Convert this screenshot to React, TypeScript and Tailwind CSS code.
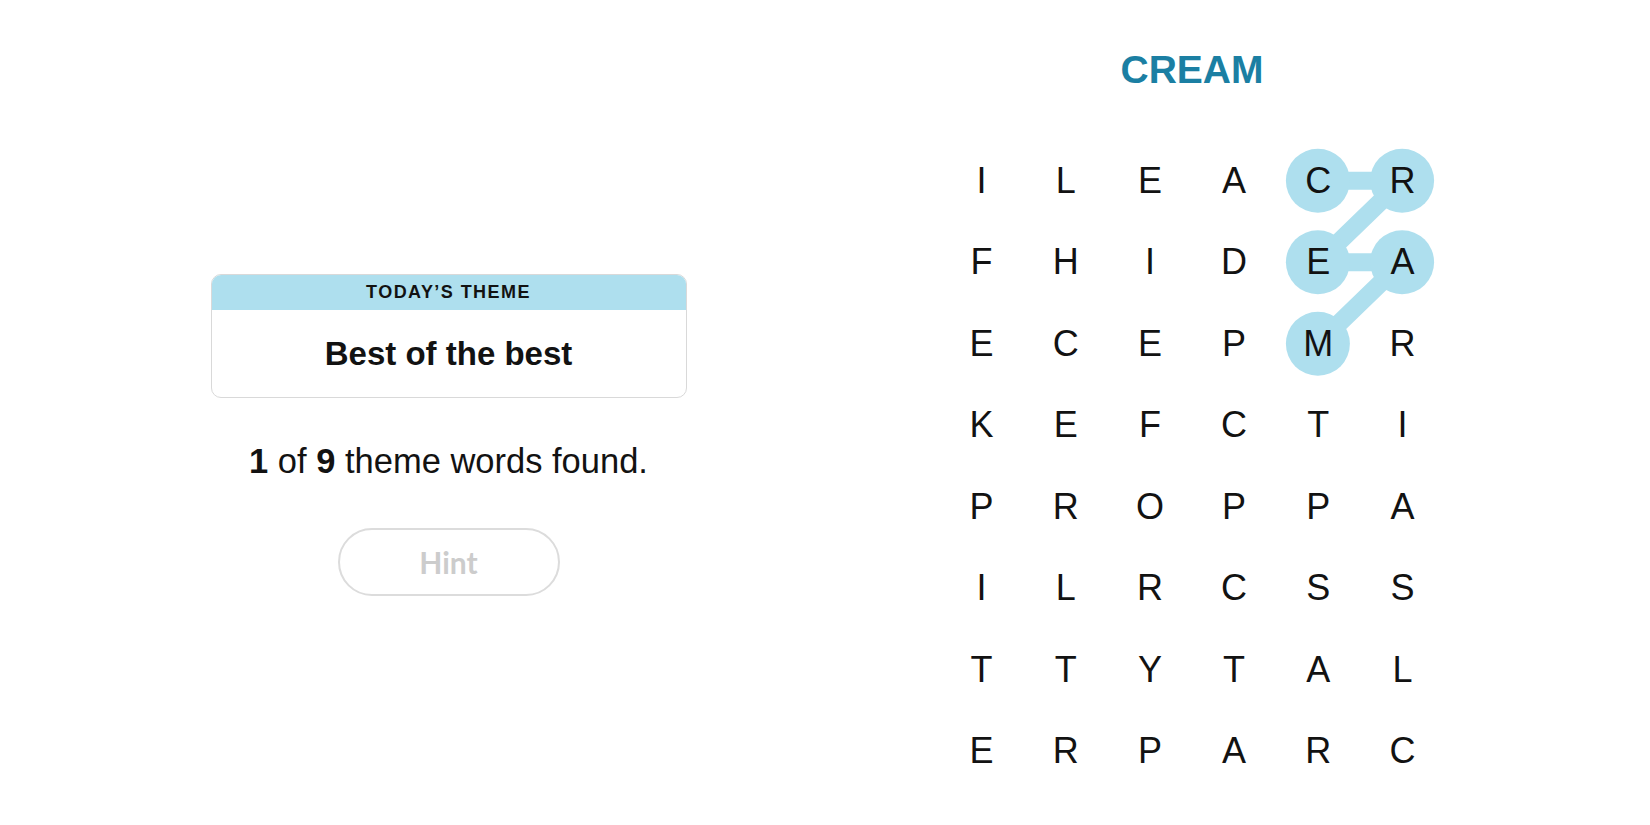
const grid = [
  ['I', 'L', 'E', 'A', 'C', 'R'],
  ['F', 'H', 'I', 'D', 'E', 'A'],
  ['E', 'C', 'E', 'P', 'M', 'R'],
  ['K', 'E', 'F', 'C', 'T', 'I'],
  ['P', 'R', 'O', 'P', 'P', 'A'],
  ['I', 'L', 'R', 'C', 'S', 'S'],
  ['T', 'T', 'Y', 'T', 'A', 'L'],
  ['E', 'R', 'P', 'A', 'R', 'C'],
];

// found word path: C R E A M
const path: [number, number][] = [
  [0, 4],
  [0, 5],
  [1, 4],
  [1, 5],
  [2, 4],
];

const CELL_W = 84.2;
const CELL_H = 81.5;

const center = (r: number, c: number) => ({ x: CELL_W / 2 + c * CELL_W, y: CELL_H / 2 + r * CELL_H });

function ThemeCard() {
  return (
    <div className="w-[476px] rounded-[10px] border border-[#d9d9d9] overflow-hidden bg-white">
      <div className="h-[35px] bg-[#aedfee] flex items-center justify-center text-[18px] font-semibold tracking-[0.08em] text-[#121212]">
        TODAY’S THEME
      </div>
      <div className="h-[87px] flex items-center justify-center text-[33px] font-bold text-[#121212]">
        Best of the best
      </div>
    </div>
  );
}

function Board() {
  const pts = path.map(([r, c]) => center(r, c));

  return (
    <div className="relative grid grid-cols-[repeat(6,84.2px)] auto-rows-[81.5px]">
      <svg className="absolute inset-0" width={CELL_W * 6} height={CELL_H * 8}>
        <polyline
          points={pts.map((p) => `${p.x},${p.y}`).join(' ')}
          fill="none"
          stroke="#aedfee"
          strokeWidth={18}
          strokeLinejoin="round"
        />
        {pts.map((p, i) => (
          <circle key={i} cx={p.x} cy={p.y} r={32} fill="#aedfee" />
        ))}
      </svg>
      {grid.map((row, r) =>
        row.map((letter, c) => (
          <div key={`${r}-${c}`} className="relative flex items-center justify-center text-[36px] leading-none text-[#121212]">
            {letter}
          </div>
        ))
      )}
    </div>
  );
}

export default function App() {
  return (
    <div className="min-h-screen bg-white flex justify-center gap-[253px] pl-[5px]" style={{ fontFamily: '"Liberation Sans", Arial, sans-serif' }}>
      {/* Left side */}
      <div className="w-[476px] pt-[274px] flex flex-col items-center">
        <ThemeCard />
        <p className="mt-[43px] text-[34.5px] leading-[40px] text-[#121212]">
          <span className="font-bold">1</span> of <span className="font-bold">9</span> theme words found.
        </p>
        <button
          className="mt-[47px] w-[222px] h-[68px] rounded-full border-2 border-[#dcdcdc] text-[30px] font-bold text-[#cccccc] bg-white"
          style={{ fontFamily: 'Lato, "Liberation Sans", sans-serif' }}
        >
          Hint
        </button>
      </div>

      {/* Right side */}
      <div className="w-[505px] pt-[50px] flex flex-col items-center">
        <h1 className="text-[39px] leading-none font-bold text-[#1b7fa3]">CREAM</h1>
        <div className="mt-[51px]">
          <Board />
        </div>
      </div>
    </div>
  );
}
